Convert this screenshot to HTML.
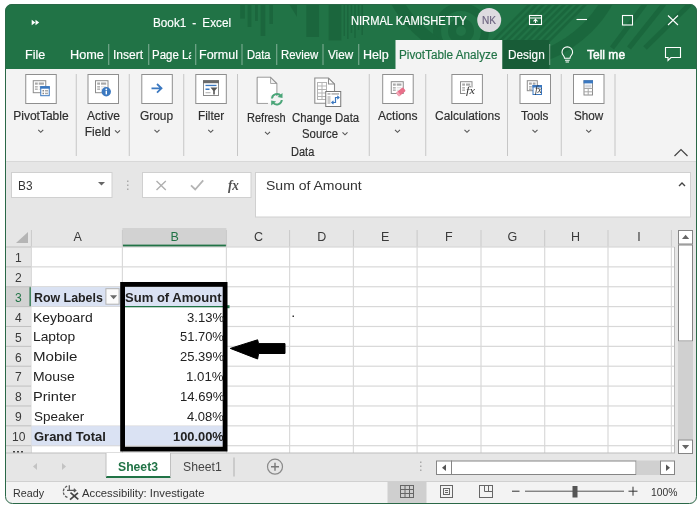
<!DOCTYPE html>
<html><head><meta charset="utf-8"><title>Excel</title>
<style>
html,body{margin:0;padding:0;}
body{width:700px;height:509px;position:relative;overflow:hidden;background:#fff;font-family:"Liberation Sans",sans-serif;}
svg#ui{position:absolute;left:0;top:0;width:700px;height:509px;display:block;}
.t{position:absolute;white-space:pre;transform-origin:0 0;font-family:"Liberation Sans",sans-serif;}
#tx{position:absolute;left:0;top:0;width:700px;height:509px;will-change:transform;}

</style></head>
<body>
<svg id="ui" width="700" height="509" viewBox="0 0 700 509">
<defs><clipPath id="wc"><rect x="5" y="4" width="692" height="500" rx="7" ry="7"/></clipPath><clipPath id="tc"><rect x="5" y="4" width="692" height="65"/></clipPath></defs>
<g clip-path="url(#wc)">
<rect x="5" y="4" width="692" height="500" fill="#e6e6e6"/>
<rect x="5" y="4" width="692" height="65" fill="#217346"/>
<g clip-path="url(#tc)">
<g fill="#1a643b" opacity="0.8">
<rect x="240.2" y="4" width="4.7" height="14.6"/>
<rect x="247.6" y="4" width="3.8" height="23.0"/>
<rect x="255" y="4" width="2.9" height="17.0"/>
<rect x="260.6" y="4" width="4.7" height="32.0"/>
<rect x="269.4" y="4" width="3.6" height="20.0"/>
<rect x="306.3" y="4" width="12.8" height="33.0"/>
<rect x="328.6" y="4" width="12.8" height="36.5"/>
<rect x="343.5" y="4" width="1.5" height="32.0"/>
<rect x="347" y="4" width="1.6" height="35.0"/>
<rect x="350.6" y="4" width="1.6" height="29.0"/>
<rect x="354.2" y="4" width="1.6" height="34.0"/>
<rect x="357.8" y="4" width="1.6" height="26.0"/>
<rect x="361.4" y="4" width="1.6" height="31.0"/>
<polygon points="289,4 297,4 297,17"/>
</g>
<g fill="none" stroke="#1a643b" opacity="0.8">
<circle cx="461" cy="31" r="9" stroke-width="8"/>
<circle cx="461" cy="31" r="24" stroke-width="8"/>
<circle cx="502" cy="-58" r="121" stroke-width="12"/>
<line x1="645" y1="4" x2="612" y2="48" stroke-width="5"/>
<line x1="664" y1="4" x2="629" y2="48" stroke-width="5"/>
<line x1="690" y1="4" x2="645" y2="48" stroke-width="5"/>
<line x1="492" y1="42" x2="530" y2="4" stroke-width="2.6"/>
<line x1="499" y1="42" x2="537" y2="4" stroke-width="2.6"/>
<line x1="506" y1="42" x2="544" y2="4" stroke-width="2.6"/>
<line x1="513" y1="42" x2="551" y2="4" stroke-width="2.6"/>
<line x1="520" y1="42" x2="558" y2="4" stroke-width="2.6"/>
<line x1="527" y1="42" x2="565" y2="4" stroke-width="2.6"/>
<line x1="534" y1="42" x2="572" y2="4" stroke-width="2.6"/>
<line x1="541" y1="42" x2="579" y2="4" stroke-width="2.6"/>
<line x1="548" y1="42" x2="586" y2="4" stroke-width="2.6"/>
</g>
</g>
<circle cx="489.2" cy="20" r="12" fill="#dedbe0"/>
<rect x="395.5" y="40" width="107" height="30" fill="#f3f3f3"/>
<rect x="502.5" y="40" width="47" height="29" fill="#185c37"/>
<rect x="108.25" y="44" width="1" height="21" fill="#fff" opacity="0.45"/>
<rect x="148.25" y="44" width="1" height="21" fill="#fff" opacity="0.45"/>
<rect x="195.25" y="44" width="1" height="21" fill="#fff" opacity="0.45"/>
<rect x="241.5" y="44" width="1" height="21" fill="#fff" opacity="0.45"/>
<rect x="276.25" y="44" width="1" height="21" fill="#fff" opacity="0.45"/>
<rect x="322.5" y="44" width="1" height="21" fill="#fff" opacity="0.45"/>
<rect x="358.25" y="44" width="1" height="21" fill="#fff" opacity="0.45"/>
<rect x="549.2" y="44" width="1" height="21" fill="#fff" opacity="0.45"/>
<rect x="5" y="69" width="692" height="92" fill="#f3f3f3"/>
<rect x="5" y="161" width="692" height="1" fill="#d8d8d8"/>
<rect x="25.75" y="74.5" width="30.5" height="29" fill="#fff" stroke="#8f8f8f" stroke-width="1"/>
<rect x="88.0" y="74.5" width="30.5" height="29" fill="#fff" stroke="#8f8f8f" stroke-width="1"/>
<rect x="141.8" y="74.5" width="30.5" height="29" fill="#fff" stroke="#8f8f8f" stroke-width="1"/>
<rect x="195.8" y="74.5" width="30.5" height="29" fill="#fff" stroke="#8f8f8f" stroke-width="1"/>
<rect x="382.7" y="74.5" width="30.5" height="29" fill="#fff" stroke="#8f8f8f" stroke-width="1"/>
<rect x="451.9" y="74.5" width="30.5" height="29" fill="#fff" stroke="#8f8f8f" stroke-width="1"/>
<rect x="520.0" y="74.5" width="30.5" height="29" fill="#fff" stroke="#8f8f8f" stroke-width="1"/>
<rect x="573.5" y="74.5" width="30.5" height="29" fill="#fff" stroke="#8f8f8f" stroke-width="1"/>
<rect x="75.75" y="74" width="1" height="82" fill="#c6c6c6"/>
<rect x="128.75" y="74" width="1" height="82" fill="#c6c6c6"/>
<rect x="183.25" y="74" width="1" height="82" fill="#c6c6c6"/>
<rect x="237.0" y="74" width="1" height="82" fill="#c6c6c6"/>
<rect x="368.75" y="74" width="1" height="82" fill="#c6c6c6"/>
<rect x="425.25" y="74" width="1" height="82" fill="#c6c6c6"/>
<rect x="507.0" y="74" width="1" height="82" fill="#c6c6c6"/>
<rect x="560.75" y="74" width="1" height="82" fill="#c6c6c6"/>
<rect x="614.5" y="74" width="1" height="82" fill="#c6c6c6"/>
<g><rect x="33.25" y="80.7" width="12.5" height="12" fill="#fff" stroke="#8c8c8c"/>
<rect x="34.95" y="82.5" width="2.8" height="2.2" fill="#a9a9a9"/><rect x="38.75" y="82.5" width="5.199999999999999" height="2.2" fill="#a9a9a9"/>
<rect x="34.95" y="86.0" width="2.8" height="1.6" fill="#b5b5b5"/><rect x="38.75" y="86.3" width="5.199999999999999" height="1" fill="#d6d6d6"/>
<rect x="34.95" y="88.4" width="2.8" height="1.6" fill="#b5b5b5"/><rect x="38.75" y="88.7" width="5.199999999999999" height="1" fill="#d6d6d6"/>
</g>
<rect x="40.75" y="86.7" width="8.5" height="9" fill="#fff" stroke="#3b78c0"/><rect x="40.25" y="86.2" width="9.5" height="2.5" fill="#3b78c0"/>
<rect x="42.5" y="90" width="1.5" height="1.5" fill="#888"/><rect x="45" y="90" width="3" height="1.5" fill="#aaa"/><rect x="42.5" y="92.7" width="1.5" height="1.5" fill="#888"/><rect x="45" y="92.7" width="3" height="1.5" fill="#aaa"/>
<g><rect x="95.5" y="80.7" width="12.5" height="12" fill="#fff" stroke="#8c8c8c"/>
<rect x="97.2" y="82.5" width="2.8" height="2.2" fill="#a9a9a9"/><rect x="101" y="82.5" width="5.199999999999999" height="2.2" fill="#a9a9a9"/>
<rect x="97.2" y="86.0" width="2.8" height="1.6" fill="#b5b5b5"/><rect x="101" y="86.3" width="5.199999999999999" height="1" fill="#d6d6d6"/>
<rect x="97.2" y="88.4" width="2.8" height="1.6" fill="#b5b5b5"/><rect x="101" y="88.7" width="5.199999999999999" height="1" fill="#d6d6d6"/>
</g>
<circle cx="106.25" cy="91.75" r="4.7" fill="#3b78c0"/><rect x="105.6" y="90.8" width="1.4" height="3.6" fill="#fff"/><circle cx="106.3" cy="89.3" r="0.9" fill="#fff"/>
<path d="M151.5,88.3 H161 M157,84 L161.5,88.3 L157,92.6" fill="none" stroke="#3b78c0" stroke-width="1.8"/>
<rect x="203.5" y="80.7" width="15" height="14.8" fill="#fff" stroke="#8a8a8a"/><rect x="203" y="80.2" width="16" height="3" fill="#6a6a6a"/>
<rect x="205.5" y="84.8" width="11" height="1.3" fill="#3b78c0"/><rect x="205.5" y="88.5" width="4" height="1.5" fill="#3b78c0"/><rect x="205.5" y="92" width="5" height="1.3" fill="#c0c0c0"/>
<polygon points="210.5,87.5 217.5,87.5 214.8,90.8 214.8,94.5 213.2,94.5 213.2,90.8" fill="#555"/>
<path d="M257.2,77.2 H270.5 L276.8,83.5 V96 M257.2,77.2 V103.3 H268" fill="none" stroke="#8c8c8c" stroke-width="1.1"/><path d="M270.5,77.2 V83.5 H276.8" fill="none" stroke="#8c8c8c" stroke-width="1.1"/>
<rect x="257.8" y="77.8" width="12.5" height="25" fill="#fff"/><polygon points="270,83.8 276.3,83.8 276.3,95 270,95" fill="#fff"/>
<g fill="none" stroke="#4aa578" stroke-width="2"><path d="M272,98.5 A5,5 0 0 1 281,96"/><path d="M281.8,100 A5,5 0 0 1 272.8,102.5"/></g><polygon points="282.5,93 282.5,98 277.5,97" fill="#4aa578"/><polygon points="271.2,105.5 271.2,100.5 276.2,101.5" fill="#4aa578"/>
<path d="M314.8,78 H328.5 L334.5,84 V103.3 H314.8 Z" fill="#fff" stroke="#8c8c8c" stroke-width="1.1"/><path d="M328.5,78 V84 H334.5" fill="none" stroke="#8c8c8c" stroke-width="1.1"/>
<g stroke="#b5b5b5" stroke-width="1" fill="none"><rect x="317.5" y="82.5" width="9" height="17"/><path d="M317.5,86 H326.5 M317.5,89.5 H326.5 M317.5,93 H326.5 M317.5,96.5 H326.5 M322,82.5 V99.5"/></g>
<rect x="325.75" y="91.5" width="15" height="15" fill="#fff" stroke="#777"/><rect x="327.5" y="93" width="3" height="1.8" fill="#bbb"/><rect x="331.5" y="93" width="7.5" height="1.8" fill="#bbb"/><rect x="327.5" y="96" width="3" height="8" fill="#ccc"/>
<path d="M332,102.5 H335.5 V97.5 H339 M333.5,100.8 L331.8,102.5 L333.5,104.2 M337.3,95.8 L339,97.5 L337.3,99.2" fill="none" stroke="#3b78c0" stroke-width="1.2"/>
<g><rect x="391.25" y="81.7" width="12" height="11.8" fill="#fff" stroke="#8c8c8c"/>
<rect x="392.95" y="83.5" width="2.8" height="2.2" fill="#a9a9a9"/><rect x="396.75" y="83.5" width="4.699999999999999" height="2.2" fill="#a9a9a9"/>
<rect x="392.95" y="87.0" width="2.8" height="1.6" fill="#b5b5b5"/><rect x="396.75" y="87.3" width="4.699999999999999" height="1" fill="#d6d6d6"/>
<rect x="392.95" y="89.4" width="2.8" height="1.6" fill="#b5b5b5"/><rect x="396.75" y="89.7" width="4.699999999999999" height="1" fill="#d6d6d6"/>
</g>
<g transform="rotate(-40 400.8 91.8)"><rect x="396.3" y="89.6" width="9" height="4.6" rx="1" fill="#e8708a"/><rect x="396.3" y="89.6" width="2.4" height="4.6" rx="0.8" fill="#f3a6b6"/></g>
<g><rect x="460.5" y="81.7" width="11.5" height="11.8" fill="#fff" stroke="#8c8c8c"/>
<rect x="462.2" y="83.5" width="2.8" height="2.2" fill="#a9a9a9"/><rect x="466" y="83.5" width="4.199999999999999" height="2.2" fill="#a9a9a9"/>
<rect x="462.2" y="87.0" width="2.8" height="1.6" fill="#b5b5b5"/><rect x="466" y="87.3" width="4.199999999999999" height="1" fill="#d6d6d6"/>
<rect x="462.2" y="89.4" width="2.8" height="1.6" fill="#b5b5b5"/><rect x="466" y="89.7" width="4.199999999999999" height="1" fill="#d6d6d6"/>
</g>
<rect x="465.5" y="87.5" width="10" height="9.5" fill="#fff"/>
<g><rect x="527.3" y="80.7" width="10" height="10" fill="#fff" stroke="#8c8c8c"/>
<rect x="529.0" y="82.5" width="2.8" height="2.2" fill="#a9a9a9"/><rect x="532.8" y="82.5" width="2.6999999999999993" height="2.2" fill="#a9a9a9"/>
<rect x="529.0" y="86.0" width="2.8" height="1.6" fill="#b5b5b5"/><rect x="532.8" y="86.3" width="2.6999999999999993" height="1" fill="#d6d6d6"/>
<rect x="529.0" y="88.4" width="2.8" height="1.6" fill="#b5b5b5"/><rect x="532.8" y="88.7" width="2.6999999999999993" height="1" fill="#d6d6d6"/>
</g>
<rect x="533" y="85.5" width="8.5" height="9" fill="#fff" stroke="#3b78c0"/><rect x="532.5" y="85" width="9.5" height="2.5" fill="#3b78c0"/>
<rect x="584" y="80.7" width="8.5" height="14.3" fill="#fff" stroke="#8c8c8c"/><rect x="583.5" y="80.2" width="9.5" height="3.2" fill="#3b78c0"/>
<path d="M584,88.5 H592.5 M584,91.8 H592.5 M588.2,88.5 V95" stroke="#a8a8a8" stroke-width="1" fill="none"/><rect x="585.2" y="84.6" width="6.2" height="3" fill="#d5d9e0"/>
<polyline points="38.25,129.8 40.75,132.3 43.25,129.8" fill="none" stroke="#555" stroke-width="1.1"/>
<polyline points="115.0,130.3 117.5,132.8 120.0,130.3" fill="none" stroke="#555" stroke-width="1.1"/>
<polyline points="154.5,129.8 157,132.3 159.5,129.8" fill="none" stroke="#555" stroke-width="1.1"/>
<polyline points="208.25,129.8 210.75,132.3 213.25,129.8" fill="none" stroke="#555" stroke-width="1.1"/>
<polyline points="265.0,131.8 267.5,134.3 270.0,131.8" fill="none" stroke="#555" stroke-width="1.1"/>
<polyline points="342.5,132.3 345,134.8 347.5,132.3" fill="none" stroke="#555" stroke-width="1.1"/>
<polyline points="395.0,129.8 397.5,132.3 400.0,129.8" fill="none" stroke="#555" stroke-width="1.1"/>
<polyline points="464.5,129.8 467,132.3 469.5,129.8" fill="none" stroke="#555" stroke-width="1.1"/>
<polyline points="532.5,129.8 535,132.3 537.5,129.8" fill="none" stroke="#555" stroke-width="1.1"/>
<polyline points="586.25,129.8 588.75,132.3 591.25,129.8" fill="none" stroke="#555" stroke-width="1.1"/>
<polyline points="674.5,156 681,149.5 687.5,156" fill="none" stroke="#444" stroke-width="1.2"/>
<rect x="11.5" y="172.5" width="100.5" height="25" fill="#fff" stroke="#d0d0d0"/>
<polygon points="98,182 105,182 101.5,185.5" fill="#666"/>
<rect x="127" y="180.5" width="1.5" height="1.5" fill="#aaa"/>
<rect x="127" y="184.5" width="1.5" height="1.5" fill="#aaa"/>
<rect x="127" y="188.5" width="1.5" height="1.5" fill="#aaa"/>
<rect x="142.5" y="172.5" width="108.5" height="25" fill="#fff" stroke="#d0d0d0"/>
<rect x="255.5" y="172.5" width="435" height="44.5" fill="#fff" stroke="#d0d0d0"/>
<path d="M156.5,181 L165.8,190 M165.8,181 L156.5,190" stroke="#b0b0b0" stroke-width="1.4" fill="none"/>
<path d="M191,185.3 L195.2,189.5 L203.2,180.3" stroke="#b4b4b4" stroke-width="1.8" fill="none"/>
<polyline points="679,186 682,183 685,186" fill="none" stroke="#444" stroke-width="1.4"/>
<rect x="6" y="247" width="668.5" height="206" fill="#fff"/>
<rect x="31" y="286.74" width="196" height="19.87" fill="#dae2f3"/>
<rect x="31" y="425.83" width="196" height="19.87" fill="#dae2f3"/>
<rect x="6" y="228" width="668.5" height="19" fill="#e6e6e6"/>
<rect x="6" y="247" width="25" height="206" fill="#e6e6e6"/>
<rect x="122.4" y="228" width="104" height="19" fill="#d2d2d2"/>
<rect x="122.4" y="244.6" width="104" height="2.4" fill="#217346"/>
<rect x="6" y="286.74" width="25" height="19.87" fill="#d2d2d2"/>
<rect x="29.5" y="286.74" width="2" height="19.87" fill="#217346"/>
<polygon points="16,243 28,243 28,232" fill="#b5b5b5"/>
<rect x="30.799999999999997" y="247" width="1.2" height="206" fill="#dadada"/>
<rect x="30.9" y="230" width="1" height="17" fill="#c9c9c9"/>
<rect x="121.80000000000001" y="247" width="1.2" height="206" fill="#dadada"/>
<rect x="121.9" y="230" width="1" height="17" fill="#c9c9c9"/>
<rect x="225.8" y="247" width="1.2" height="206" fill="#dadada"/>
<rect x="225.9" y="230" width="1" height="17" fill="#c9c9c9"/>
<rect x="289.0" y="247" width="1.2" height="206" fill="#dadada"/>
<rect x="289.1" y="230" width="1" height="17" fill="#c9c9c9"/>
<rect x="352.79999999999995" y="247" width="1.2" height="206" fill="#dadada"/>
<rect x="352.9" y="230" width="1" height="17" fill="#c9c9c9"/>
<rect x="416.5" y="247" width="1.2" height="206" fill="#dadada"/>
<rect x="416.6" y="230" width="1" height="17" fill="#c9c9c9"/>
<rect x="480.4" y="247" width="1.2" height="206" fill="#dadada"/>
<rect x="480.5" y="230" width="1" height="17" fill="#c9c9c9"/>
<rect x="544.1" y="247" width="1.2" height="206" fill="#dadada"/>
<rect x="544.2" y="230" width="1" height="17" fill="#c9c9c9"/>
<rect x="607.4" y="247" width="1.2" height="206" fill="#dadada"/>
<rect x="607.5" y="230" width="1" height="17" fill="#c9c9c9"/>
<rect x="670.8" y="247" width="1.2" height="206" fill="#dadada"/>
<rect x="670.9" y="230" width="1" height="17" fill="#c9c9c9"/>
<rect x="31" y="246.4" width="643.5" height="1.2" fill="#d8d8d8"/>
<rect x="6" y="246.5" width="25" height="1" fill="#c0c0c0"/>
<rect x="31" y="266.27" width="643.5" height="1.2" fill="#d8d8d8"/>
<rect x="6" y="266.37" width="25" height="1" fill="#c0c0c0"/>
<rect x="31" y="286.14" width="643.5" height="1.2" fill="#d8d8d8"/>
<rect x="6" y="286.24" width="25" height="1" fill="#c0c0c0"/>
<rect x="31" y="306.01" width="643.5" height="1.2" fill="#d8d8d8"/>
<rect x="6" y="306.11" width="25" height="1" fill="#c0c0c0"/>
<rect x="31" y="325.88" width="643.5" height="1.2" fill="#d8d8d8"/>
<rect x="6" y="325.98" width="25" height="1" fill="#c0c0c0"/>
<rect x="31" y="345.75" width="643.5" height="1.2" fill="#d8d8d8"/>
<rect x="6" y="345.85" width="25" height="1" fill="#c0c0c0"/>
<rect x="31" y="365.62" width="643.5" height="1.2" fill="#d8d8d8"/>
<rect x="6" y="365.72" width="25" height="1" fill="#c0c0c0"/>
<rect x="31" y="385.48999999999995" width="643.5" height="1.2" fill="#d8d8d8"/>
<rect x="6" y="385.59" width="25" height="1" fill="#c0c0c0"/>
<rect x="31" y="405.35999999999996" width="643.5" height="1.2" fill="#d8d8d8"/>
<rect x="6" y="405.46" width="25" height="1" fill="#c0c0c0"/>
<rect x="31" y="425.22999999999996" width="643.5" height="1.2" fill="#d8d8d8"/>
<rect x="6" y="425.33" width="25" height="1" fill="#c0c0c0"/>
<rect x="31" y="445.09999999999997" width="643.5" height="1.2" fill="#d8d8d8"/>
<rect x="6" y="445.2" width="25" height="1" fill="#c0c0c0"/>
<rect x="674" y="247" width="1" height="206" fill="#bdbdbd"/>
<rect x="6" y="452.5" width="669" height="1" fill="#bdbdbd"/>
<rect x="31.5" y="307.11" width="195" height="118.22" fill="#fff"/>
<rect x="31.5" y="287.24" width="195" height="18.87" fill="#dae2f3"/>
<rect x="31.5" y="426.33" width="195" height="18.87" fill="#dae2f3"/>
<rect x="122" y="306" width="106" height="1.3" fill="#217346"/>
<rect x="226.5" y="305.2" width="3" height="3" fill="#217346"/>
<rect x="105.9" y="288.7" width="13.2" height="15.5" fill="#fbfbfb" stroke="#b2b2b2"/>
<polygon points="110,295.3 117.2,295.3 113.6,299.2" fill="#6a6a6a"/>
<rect x="292.5" y="315.5" width="1.5" height="1.5" fill="#333"/>
<rect x="13" y="451" width="2" height="1.5" fill="#444"/><rect x="17" y="451" width="2" height="1.5" fill="#444"/><rect x="21" y="451" width="2" height="1.5" fill="#444"/>
<rect x="122.6" y="284.4" width="102.5" height="164.7" fill="none" stroke="#000" stroke-width="4.8"/>
<polygon points="230.3,348.4 257.6,339.8 258.6,343.6 285,343.6 285,353.5 258.6,353.5 257.6,359" fill="#000" stroke="#000" stroke-width="1" stroke-linejoin="round"/>
<rect x="678.5" y="230.5" width="14" height="13.5" fill="#fff" stroke="#858585"/>
<polygon points="682,238.9 689.2,238.9 685.6,234.7" fill="#666"/>
<rect x="678.5" y="245" width="14" height="96" fill="#fff" stroke="#858585"/>
<rect x="678" y="341.5" width="15" height="98" fill="#d0d0d0"/>
<rect x="678.5" y="440" width="14" height="13.5" fill="#fff" stroke="#858585"/>
<polygon points="682,445 689.2,445 685.6,449.2" fill="#666"/>
<rect x="106" y="453" width="64.5" height="24" fill="#fff"/>
<rect x="106" y="476" width="64.5" height="2" fill="#217346"/>
<rect x="105.5" y="453" width="1" height="24" fill="#c0c0c0"/><rect x="170" y="453" width="1" height="24" fill="#c0c0c0"/>
<rect x="233.5" y="457.5" width="1" height="19" fill="#b0b0b0"/>
<polygon points="37,463 37,470 33,466.5" fill="#c3c3c3"/><polygon points="62,463 62,470 66,466.5" fill="#c3c3c3"/>
<circle cx="275" cy="466.7" r="7.5" fill="none" stroke="#8a8a8a" stroke-width="1.2"/>
<path d="M271,466.7 H279 M275,462.7 V470.7" stroke="#777" stroke-width="1.4"/>
<rect x="420" y="461.5" width="1.5" height="1.5" fill="#aaa"/>
<rect x="420" y="465.5" width="1.5" height="1.5" fill="#aaa"/>
<rect x="420" y="469.5" width="1.5" height="1.5" fill="#aaa"/>
<rect x="436.5" y="461" width="15" height="13.5" fill="#fff" stroke="#858585"/>
<polygon points="446,464.5 446,471 442,467.75" fill="#555"/>
<rect x="451.5" y="461" width="184.5" height="13.5" fill="#fff" stroke="#858585"/>
<rect x="636.5" y="460.5" width="24" height="14.5" fill="#d0d0d0"/>
<rect x="660.5" y="461" width="14" height="13.5" fill="#fff" stroke="#858585"/>
<polygon points="666,464.5 666,471 670,467.75" fill="#555"/>
<rect x="5" y="482" width="692" height="22" fill="#f3f3f3"/>
<rect x="5" y="481" width="692" height="1" fill="#d0d0d0"/>
<rect x="387.5" y="482" width="39" height="22" fill="#cfcfcf"/>
<g fill="none" stroke="#666" stroke-width="1"><rect x="400.5" y="485.5" width="13" height="12"/><path d="M400.5,489.5 H413.5 M400.5,493.5 H413.5 M405,485.5 V497.5 M409.5,485.5 V497.5"/></g>
<g fill="none" stroke="#666" stroke-width="1"><rect x="440.5" y="485.5" width="12" height="12"/><rect x="443.5" y="488.5" width="6" height="6"/><path d="M445,490.5 H448 M445,492.5 H448"/></g>
<g fill="none" stroke="#666" stroke-width="1"><rect x="479.5" y="485.5" width="13" height="12"/><path d="M484.5,485.5 V491.5 H492.5 M488.5,485.5 V491.5"/></g>
<rect x="512" y="490.7" width="7.5" height="1" fill="#333"/>
<rect x="525" y="490.7" width="99" height="1" fill="#555"/>
<rect x="572.5" y="486" width="5" height="11.5" fill="#555"/>
<path d="M628.5,491.2 H637.5 M633,486.7 V495.7" stroke="#333" stroke-width="1"/>
<g fill="none" stroke="#5a5a5a" stroke-width="1.3"><path d="M67.2,486.2 A5.9,5.9 0 0 0 68.6,497.6" stroke-dasharray="2.6,1.3"/><path d="M69.3,485.3 V490.4 M67,490.4 H75.5 M73.8,488.8 L75.8,490.4 L73.8,492" stroke-width="1.2"/><path d="M70.5,492.6 L78.3,499.4 M78,492.9 L70,499.6" stroke="#444" stroke-width="1.7"/></g>
</g>
<rect x="5.5" y="4.5" width="691" height="499" rx="7" ry="7" fill="none" stroke="#2a6847" stroke-width="1"/>
<g fill="none" stroke="#fff" stroke-width="1.1">
<rect x="529.5" y="15.5" width="12" height="9"/><path d="M529.5,18 H541.5 M535.5,23 V19.5 M533.5,21.3 L535.5,19.3 L537.5,21.3"/>
<path d="M576.5,19.5 H587"/>
<rect x="622.5" y="15.5" width="10" height="9.5"/>
<path d="M668,15.5 L678,25 M678,15.5 L668,25"/>
<path d="M564.5,58.2 C564.5,55.7 562,55.2 562,52.2 A5.3,5.3 0 0 1 572.6,52.2 C572.6,55.2 570,55.7 570,58.2 Z M565,60.2 H569.7 M565.6,62 H569"/>
<path d="M665.5,47.5 H680.5 V57.5 H671 L668,60.5 V57.5 H665.5 Z"/>
</g>
<polygon points="31.7,19.8 31.7,25.2 35.4,22.5" fill="#fff"/><polygon points="35.5,19.8 35.5,25.2 39.2,22.5" fill="#fff"/>
</svg>
<div id="tx">
<span class="t" style="left:153.36px;top:17.45px;font-size:12.5px;line-height:12.5px;font-weight:400;color:#fff;transform:scaleX(0.9391);word-spacing:3px;-webkit-text-stroke:0.18px #fff;">Book1 - Excel</span>
<span class="t" style="left:350.67px;top:15.20px;font-size:12px;line-height:12px;font-weight:400;color:#fff;transform:scaleX(0.9263);-webkit-text-stroke:0.18px #fff;">NIRMAL KAMISHETTY</span>
<span class="t" style="left:482.18px;top:14.95px;font-size:10.5px;line-height:10.5px;font-weight:400;color:#6f6682;transform:scaleX(0.9600);-webkit-text-stroke:0.18px #6f6682;">NK</span>
<span class="t" style="left:24.96px;top:48.60px;font-size:12px;line-height:12px;font-weight:400;color:#fff;transform:scaleX(1.0423);-webkit-text-stroke:0.18px #fff;">File</span>
<span class="t" style="left:69.69px;top:48.60px;font-size:12px;line-height:12px;font-weight:400;color:#fff;transform:scaleX(1.0574);-webkit-text-stroke:0.18px #fff;">Home</span>
<span class="t" style="left:113.00px;top:48.60px;font-size:12px;line-height:12px;font-weight:400;color:#fff;transform:scaleX(1.0000);-webkit-text-stroke:0.18px #fff;">Insert</span>
<span class="t" style="left:152.04px;top:48.60px;font-size:12px;line-height:12px;font-weight:400;color:#fff;transform:scaleX(0.9550);-webkit-text-stroke:0.18px #fff;overflow:hidden;padding-bottom:4px;width:41.10px;">Page Layout</span>
<span class="t" style="left:198.96px;top:48.60px;font-size:12px;line-height:12px;font-weight:400;color:#fff;transform:scaleX(1.0423);-webkit-text-stroke:0.18px #fff;">Formul</span>
<span class="t" style="left:247.07px;top:48.60px;font-size:12px;line-height:12px;font-weight:400;color:#fff;transform:scaleX(0.9286);-webkit-text-stroke:0.18px #fff;">Data</span>
<span class="t" style="left:280.80px;top:48.60px;font-size:12px;line-height:12px;font-weight:400;color:#fff;transform:scaleX(0.9477);-webkit-text-stroke:0.18px #fff;">Review</span>
<span class="t" style="left:328.00px;top:48.60px;font-size:12px;line-height:12px;font-weight:400;color:#fff;transform:scaleX(0.9709);-webkit-text-stroke:0.18px #fff;">View</span>
<span class="t" style="left:363.46px;top:48.60px;font-size:12px;line-height:12px;font-weight:400;color:#fff;transform:scaleX(1.0430);-webkit-text-stroke:0.18px #fff;">Help</span>
<span class="t" style="left:399.02px;top:48.60px;font-size:12px;line-height:12px;font-weight:400;color:#217346;transform:scaleX(0.9773);-webkit-text-stroke:0.18px #217346;">PivotTable Analyze</span>
<span class="t" style="left:507.62px;top:48.60px;font-size:12px;line-height:12px;font-weight:400;color:#fff;transform:scaleX(0.9831);-webkit-text-stroke:0.18px #fff;">Design</span>
<span class="t" style="left:587.05px;top:48.60px;font-size:12px;line-height:12px;font-weight:400;color:#fff;transform:scaleX(1.0013);-webkit-text-stroke:0.45px #fff;">Tell me</span>
<span class="t" style="left:13.25px;top:110.00px;font-size:12px;line-height:12px;font-weight:400;color:#2e2e2e;transform:scaleX(1.0000);-webkit-text-stroke:0.18px #2e2e2e;">PivotTable</span>
<span class="t" style="left:86.75px;top:110.00px;font-size:12px;line-height:12px;font-weight:400;color:#2e2e2e;transform:scaleX(1.0078);-webkit-text-stroke:0.18px #2e2e2e;">Active</span>
<span class="t" style="left:84.75px;top:126.25px;font-size:12px;line-height:12px;font-weight:400;color:#2e2e2e;transform:scaleX(1.0000);-webkit-text-stroke:0.18px #2e2e2e;">Field</span>
<span class="t" style="left:140.25px;top:110.00px;font-size:12px;line-height:12px;font-weight:400;color:#2e2e2e;transform:scaleX(0.9923);-webkit-text-stroke:0.18px #2e2e2e;">Group</span>
<span class="t" style="left:197.77px;top:110.00px;font-size:12px;line-height:12px;font-weight:400;color:#2e2e2e;transform:scaleX(0.9804);-webkit-text-stroke:0.18px #2e2e2e;">Filter</span>
<span class="t" style="left:247.08px;top:112.00px;font-size:12px;line-height:12px;font-weight:400;color:#2e2e2e;transform:scaleX(0.9193);-webkit-text-stroke:0.18px #2e2e2e;">Refresh</span>
<span class="t" style="left:291.52px;top:112.00px;font-size:12px;line-height:12px;font-weight:400;color:#2e2e2e;transform:scaleX(0.9502);-webkit-text-stroke:0.18px #2e2e2e;">Change Data</span>
<span class="t" style="left:302.03px;top:128.00px;font-size:12px;line-height:12px;font-weight:400;color:#2e2e2e;transform:scaleX(0.9459);-webkit-text-stroke:0.18px #2e2e2e;">Source</span>
<span class="t" style="left:291.08px;top:146.00px;font-size:12px;line-height:12px;font-weight:400;color:#2e2e2e;transform:scaleX(0.9184);-webkit-text-stroke:0.18px #2e2e2e;">Data</span>
<span class="t" style="left:378.25px;top:110.00px;font-size:12px;line-height:12px;font-weight:400;color:#2e2e2e;transform:scaleX(1.0064);-webkit-text-stroke:0.18px #2e2e2e;">Actions</span>
<span class="t" style="left:434.50px;top:110.00px;font-size:12px;line-height:12px;font-weight:400;color:#2e2e2e;transform:scaleX(0.9961);-webkit-text-stroke:0.18px #2e2e2e;">Calculations</span>
<span class="t" style="left:521.00px;top:110.00px;font-size:12px;line-height:12px;font-weight:400;color:#2e2e2e;transform:scaleX(0.9817);-webkit-text-stroke:0.18px #2e2e2e;">Tools</span>
<span class="t" style="left:573.76px;top:110.00px;font-size:12px;line-height:12px;font-weight:400;color:#2e2e2e;transform:scaleX(0.9746);-webkit-text-stroke:0.18px #2e2e2e;">Show</span>
<span class="t" style="left:18.05px;top:179.75px;font-size:12.5px;line-height:12.5px;font-weight:400;color:#333;transform:scaleX(0.9455);">B3</span>
<span class="t" style="left:265.79px;top:179.00px;font-size:13px;line-height:13px;font-weight:400;color:#333;transform:scaleX(1.0773);">Sum of Amount</span>
<span class="t" style="left:73.58px;top:230.75px;font-size:12.5px;line-height:12.5px;font-weight:400;color:#3a3a3a;transform:scaleX(1.0000);">A</span>
<span class="t" style="left:170.53px;top:230.75px;font-size:12.5px;line-height:12.5px;font-weight:400;color:#217346;transform:scaleX(1.0000);">B</span>
<span class="t" style="left:253.88px;top:230.75px;font-size:12.5px;line-height:12.5px;font-weight:400;color:#3a3a3a;transform:scaleX(1.0000);">C</span>
<span class="t" style="left:317.25px;top:230.75px;font-size:12.5px;line-height:12.5px;font-weight:400;color:#3a3a3a;transform:scaleX(1.0000);">D</span>
<span class="t" style="left:381.12px;top:230.75px;font-size:12.5px;line-height:12.5px;font-weight:400;color:#3a3a3a;transform:scaleX(1.0000);">E</span>
<span class="t" style="left:444.88px;top:230.75px;font-size:12.5px;line-height:12.5px;font-weight:400;color:#3a3a3a;transform:scaleX(1.0000);">F</span>
<span class="t" style="left:507.38px;top:230.75px;font-size:12.5px;line-height:12.5px;font-weight:400;color:#3a3a3a;transform:scaleX(1.0000);">G</span>
<span class="t" style="left:571.00px;top:230.75px;font-size:12.5px;line-height:12.5px;font-weight:400;color:#3a3a3a;transform:scaleX(1.0000);">H</span>
<span class="t" style="left:637.25px;top:230.75px;font-size:12.5px;line-height:12.5px;font-weight:400;color:#3a3a3a;transform:scaleX(1.0000);">I</span>
<span class="t" style="left:15.01px;top:251.20px;font-size:13px;line-height:13px;font-weight:400;color:#3a3a3a;transform:scaleX(0.9300);">1</span>
<span class="t" style="left:15.13px;top:271.07px;font-size:13px;line-height:13px;font-weight:400;color:#3a3a3a;transform:scaleX(0.9300);">2</span>
<span class="t" style="left:15.13px;top:290.94px;font-size:13px;line-height:13px;font-weight:400;color:#217346;transform:scaleX(0.9300);">3</span>
<span class="t" style="left:15.24px;top:310.81px;font-size:13px;line-height:13px;font-weight:400;color:#3a3a3a;transform:scaleX(0.9300);">4</span>
<span class="t" style="left:15.13px;top:330.68px;font-size:13px;line-height:13px;font-weight:400;color:#3a3a3a;transform:scaleX(0.9300);">5</span>
<span class="t" style="left:15.01px;top:350.55px;font-size:13px;line-height:13px;font-weight:400;color:#3a3a3a;transform:scaleX(0.9300);">6</span>
<span class="t" style="left:15.13px;top:370.42px;font-size:13px;line-height:13px;font-weight:400;color:#3a3a3a;transform:scaleX(0.9300);">7</span>
<span class="t" style="left:15.13px;top:390.29px;font-size:13px;line-height:13px;font-weight:400;color:#3a3a3a;transform:scaleX(0.9300);">8</span>
<span class="t" style="left:15.24px;top:410.16px;font-size:13px;line-height:13px;font-weight:400;color:#3a3a3a;transform:scaleX(0.9300);">9</span>
<span class="t" style="left:11.52px;top:430.03px;font-size:13px;line-height:13px;font-weight:400;color:#3a3a3a;transform:scaleX(0.9300);">10</span>
<span class="t" style="left:33.69px;top:290.60px;font-size:13px;line-height:13px;font-weight:700;color:#222;transform:scaleX(0.9521);">Row Labels</span>
<span class="t" style="left:33.33px;top:310.50px;font-size:13px;line-height:13px;font-weight:400;color:#222;transform:scaleX(1.0716);">Keyboard</span>
<span class="t" style="left:33.34px;top:330.37px;font-size:13px;line-height:13px;font-weight:400;color:#222;transform:scaleX(1.0614);">Laptop</span>
<span class="t" style="left:33.24px;top:350.24px;font-size:13px;line-height:13px;font-weight:400;color:#222;transform:scaleX(1.1592);">Mobile</span>
<span class="t" style="left:33.33px;top:370.11px;font-size:13px;line-height:13px;font-weight:400;color:#222;transform:scaleX(1.0720);">Mouse</span>
<span class="t" style="left:33.28px;top:389.98px;font-size:13px;line-height:13px;font-weight:400;color:#222;transform:scaleX(1.1243);">Printer</span>
<span class="t" style="left:33.62px;top:409.85px;font-size:13px;line-height:13px;font-weight:400;color:#222;transform:scaleX(1.0358);">Speaker</span>
<span class="t" style="left:33.90px;top:429.80px;font-size:13px;line-height:13px;font-weight:700;color:#222;transform:scaleX(0.9986);">Grand Total</span>
<span class="t" style="left:125.10px;top:290.60px;font-size:13px;line-height:13px;font-weight:700;color:#222;transform:scaleX(1.0031);">Sum of Amount</span>
<span class="t" style="left:187.00px;top:310.50px;font-size:13px;line-height:13px;font-weight:400;color:#222;transform:scaleX(1.0056);">3.13%</span>
<span class="t" style="left:180.20px;top:330.37px;font-size:13px;line-height:13px;font-weight:400;color:#222;transform:scaleX(0.9942);">51.70%</span>
<span class="t" style="left:179.95px;top:350.24px;font-size:13px;line-height:13px;font-weight:400;color:#222;transform:scaleX(1.0000);">25.39%</span>
<span class="t" style="left:186.48px;top:370.11px;font-size:13px;line-height:13px;font-weight:400;color:#222;transform:scaleX(1.0197);">1.01%</span>
<span class="t" style="left:179.69px;top:389.98px;font-size:13px;line-height:13px;font-weight:400;color:#222;transform:scaleX(1.0058);">14.69%</span>
<span class="t" style="left:187.25px;top:409.85px;font-size:13px;line-height:13px;font-weight:400;color:#222;transform:scaleX(0.9986);">4.08%</span>
<span class="t" style="left:173.26px;top:429.80px;font-size:13px;line-height:13px;font-weight:700;color:#222;transform:scaleX(0.9891);">100.00%</span>
<span class="t" style="left:117.51px;top:460.75px;font-size:12.5px;line-height:12.5px;font-weight:700;color:#217346;transform:scaleX(0.9750);">Sheet3</span>
<span class="t" style="left:182.87px;top:460.75px;font-size:12.5px;line-height:12.5px;font-weight:400;color:#444;transform:scaleX(0.9778);">Sheet1</span>
<span class="t" style="left:12.72px;top:487.50px;font-size:11px;line-height:11px;font-weight:400;color:#333;transform:scaleX(0.9756);">Ready</span>
<span class="t" style="left:82.00px;top:487.50px;font-size:11px;line-height:11px;font-weight:400;color:#333;transform:scaleX(1.0274);">Accessibility: Investigate</span>
<span class="t" style="left:650.89px;top:486.50px;font-size:11px;line-height:11px;font-weight:400;color:#333;transform:scaleX(0.9407);">100%</span>
<span class="t" style="left:227.50px;top:179.00px;font-size:14px;line-height:14px;font-weight:700;color:#505050;transform:scaleX(0.9333);font-style:italic;font-family:&quot;Liberation Serif&quot;, serif;">fx</span>
<span class="t" style="left:466.01px;top:85.55px;font-size:10.5px;line-height:10.5px;font-weight:400;color:#333;transform:scaleX(1.1724);font-style:italic;font-family:&quot;Liberation Serif&quot;, serif;">fx</span>
<span class="t" style="left:534.80px;top:86.05px;font-size:9.5px;line-height:9.5px;font-weight:400;color:#333;transform:scaleX(0.9926);font-style:italic;font-family:&quot;Liberation Serif&quot;, serif;">fx</span>
</div>
</body></html>
